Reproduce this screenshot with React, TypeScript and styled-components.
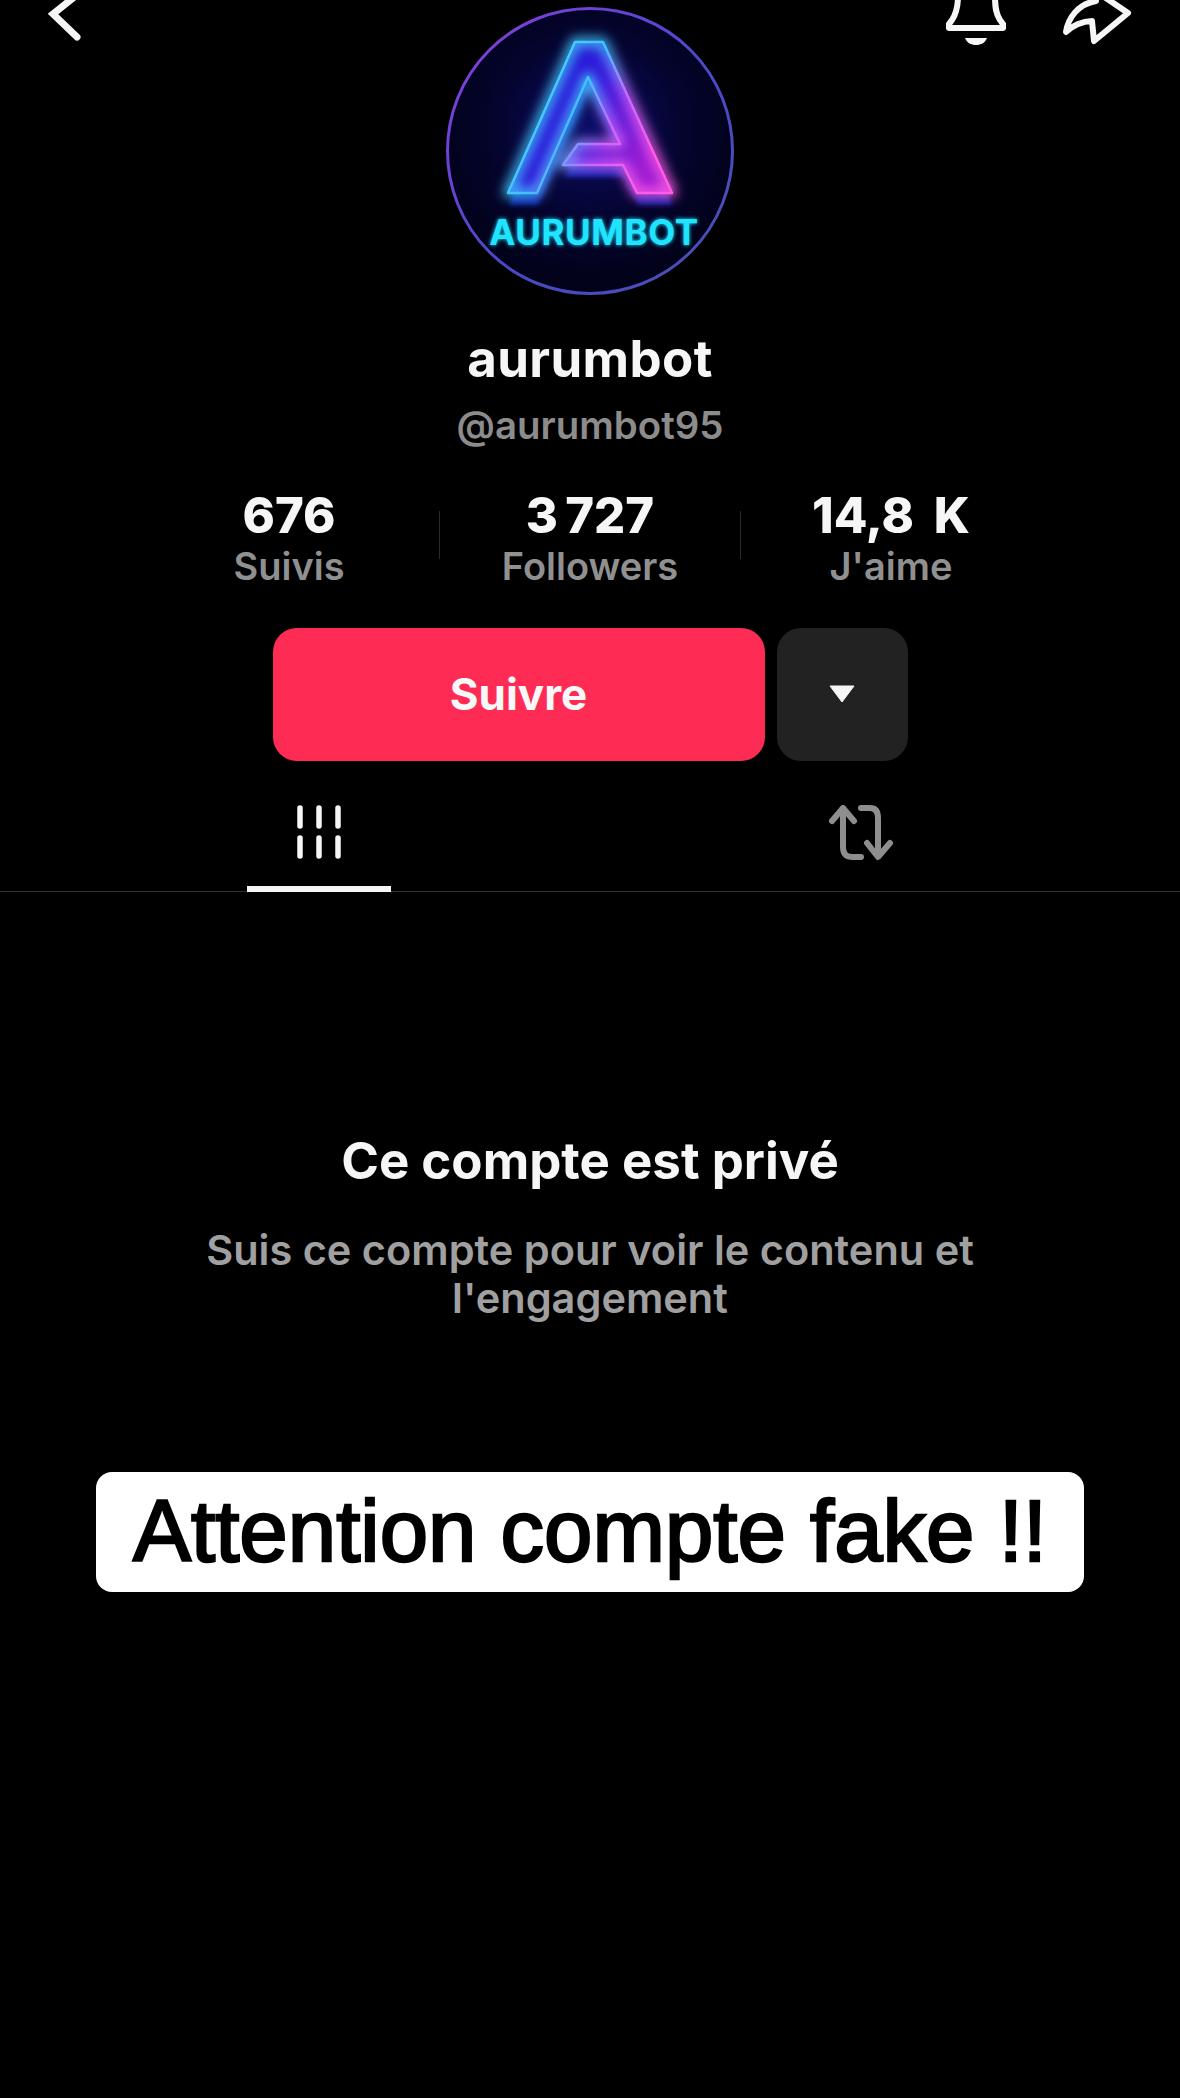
import React from 'react'
import styled, { createGlobalStyle } from 'styled-components'

const GlobalStyle = createGlobalStyle`
  html, body {
    margin: 0;
    padding: 0;
    background: #000;
  }
`

const Page = styled.div`
  width: 1180px;
  height: 2098px;
  overflow: hidden;
  background: #000;
  color: #fff;
  font-family: Inter, "Noto Sans", sans-serif;
  display: flex;
  flex-direction: column;
  align-items: center;
`

const Top = styled.div`
  width: 100%;
  display: grid;
  grid-template-columns: 1fr 288px 1fr;
`

const TopLeft = styled.div`
  display: flex;
  padding-left: 48px;
`

const TopRight = styled.div`
  display: flex;
  justify-content: flex-end;
  gap: 56px;
  padding-right: 48px;
`

const Avatar = styled.div`
  padding-top: 7px;
  height: 288px;
`

const Name = styled.h1`
  margin: 36px 0 0;
  font-size: 51px;
  line-height: 56px;
  font-weight: 700;
  letter-spacing: 0.4px;
  color: #f6f6f6;
`

const Handle = styled.div`
  margin-top: 16px;
  font-size: 38.4px;
  line-height: 44px;
  font-weight: 600;
  color: #8c8c8c;
`

const Stats = styled.div`
  margin-top: 40px;
  display: flex;
  align-items: center;
`

const Stat = styled.div`
  width: 300px;
  display: flex;
  flex-direction: column;
  align-items: center;
`

const StatValue = styled.div`
  font-size: 49px;
  line-height: 58px;
  font-weight: 800;
  word-spacing: 9px;
  color: #f6f6f6;
`

const StatLabel = styled.div`
  margin-top: -2px;
  font-size: 38px;
  line-height: 46px;
  font-weight: 600;
  color: #909090;
`

const Divider = styled.div`
  width: 1px;
  height: 48px;
  margin-bottom: 6px;
  background: #2a2a2a;
`

const Actions = styled.div`
  margin-top: 39px;
  display: flex;
  gap: 12px;
`

const FollowButton = styled.button`
  width: 492px;
  height: 133px;
  border: 0;
  border-radius: 24px;
  background: #fe2c55;
  color: #f8f8f8;
  font-family: inherit;
  font-size: 44px;
  font-weight: 700;
  padding: 0 0 2px;
`

const MoreButton = styled.button`
  width: 131px;
  height: 133px;
  border: 0;
  border-radius: 24px;
  background: #222222;
  display: flex;
  align-items: center;
  justify-content: center;
  padding: 0 0 2px;
`

const Tabs = styled.div`
  margin-top: 32px;
  width: 100%;
  height: 99px;
  box-sizing: border-box;
  border-bottom: 1px solid #2e2e2e;
  display: flex;
`

const Tab = styled.div<{ $x: number; $active?: boolean }>`
  margin-left: ${(p) => p.$x}px;
  width: 144px;
  height: 99px;
  box-sizing: border-box;
  padding-top: 12px;
  display: flex;
  justify-content: center;
  border-bottom: ${(p) => (p.$active ? '6px solid #f6f6f6' : '0')};
`

const PrivateBlock = styled.div`
  margin-top: 240px;
  display: flex;
  flex-direction: column;
  align-items: center;
  text-align: center;
`

const PrivateTitle = styled.h2`
  margin: 0;
  font-size: 51px;
  line-height: 58px;
  font-weight: 700;
  color: #f6f6f6;
`

const PrivateText = styled.p`
  margin: 36px 0 0;
  width: 800px;
  font-size: 41.5px;
  line-height: 48px;
  font-weight: 600;
  color: #a0a0a0;
`

const Banner = styled.div`
  margin-top: 150px;
  width: 988px;
  height: 120px;
  box-sizing: border-box;
  padding-bottom: 3px;
  border-radius: 16px;
  background: #fff;
  color: #000;
  display: flex;
  align-items: center;
  justify-content: center;
  font-family: "Liberation Sans", Arial, sans-serif;
  font-size: 87px;
  line-height: 1;
  -webkit-text-stroke: 2.4px #000;
`

const LETTER_A = 'M62 186 L129 35 L157 35 L226 186 L191 186 L177 158 L117 158 L132 137 L174 137 L142 70 L91 186 Z'

const Logo = () => (
  <svg width="288" height="288" viewBox="0 0 288 288">
    <defs>
      <radialGradient id="disc" cx="50%" cy="42%" r="55%">
        <stop offset="0%" stopColor="#0c0c68" />
        <stop offset="60%" stopColor="#04042e" />
        <stop offset="100%" stopColor="#02021a" />
      </radialGradient>
      <linearGradient id="ring" x1="0" y1="0" x2="1" y2="1">
        <stop offset="0%" stopColor="#8a3de0" />
        <stop offset="55%" stopColor="#4a48c8" />
        <stop offset="100%" stopColor="#4a50b0" />
      </linearGradient>
      <linearGradient id="neon" x1="0" y1="0" x2="1" y2="0.5">
        <stop offset="0%" stopColor="#4ae0ff" />
        <stop offset="50%" stopColor="#40c0ff" />
        <stop offset="72%" stopColor="#c866ff" />
        <stop offset="100%" stopColor="#ff5ce6" />
      </linearGradient>
      <linearGradient id="fill" x1="0" y1="0" x2="1" y2="0.5">
        <stop offset="0%" stopColor="#0a22d8" />
        <stop offset="55%" stopColor="#3a18e0" />
        <stop offset="100%" stopColor="#b01cd8" />
      </linearGradient>
      <filter id="glow" x="-30%" y="-30%" width="160%" height="160%">
        <feGaussianBlur stdDeviation="6" />
      </filter>
      <filter id="soft" x="-30%" y="-30%" width="160%" height="160%">
        <feGaussianBlur stdDeviation="2.2" />
      </filter>
    </defs>
    <circle cx="144" cy="144" r="142.5" fill="url(#disc)" stroke="url(#ring)" strokeWidth="3" />
    <path d={LETTER_A} fill="#0c28d0" opacity="0.7" transform="translate(1 12)" filter="url(#soft)" />
    <path d={LETTER_A} fill="url(#fill)" opacity="0.9" />
    <path d={LETTER_A} fill="none" stroke="url(#neon)" strokeWidth="9" strokeLinejoin="round" filter="url(#glow)" />
    <path d={LETTER_A} fill="none" stroke="url(#neon)" strokeWidth="2.5" strokeLinejoin="round" />
    <text
      x="148"
      y="238"
      textAnchor="middle"
      fontFamily="Inter, sans-serif"
      fontWeight="700"
      fontSize="35"
      letterSpacing="0.6"
      fill="#1fe4ff"
      filter="url(#soft)"
    >
      AURUMBOT
    </text>
    <text
      x="148"
      y="238"
      textAnchor="middle"
      fontFamily="Inter, sans-serif"
      fontWeight="700"
      fontSize="35"
      letterSpacing="0.6"
      fill="#1fe4ff"
    >
      AURUMBOT
    </text>
  </svg>
)

const Back = () => (
  <svg width="40" height="46" viewBox="0 0 40 46">
    <path d="M30 -6 L5 14 L29 37" fill="none" stroke="#f6f6f6" strokeWidth="7" strokeLinecap="round" strokeLinejoin="miter" />
  </svg>
)

const Bell = () => (
  <svg width="60" height="46" viewBox="0 0 60 46">
    <path
      d="M12 -4 C12 8 10 14 6 20 C3 24 1 26 3 28 H57 C59 26 57 24 54 20 C50 14 49 8 49 -4"
      fill="none"
      stroke="#f6f6f6"
      strokeWidth="6"
      strokeLinejoin="round"
    />
    <path d="M19 38 H41 C39 43 35 45 30 45 C25 45 21 43 19 38 Z" fill="#f6f6f6" />
  </svg>
)

const Share = () => (
  <svg width="70" height="46" viewBox="0 0 70 46">
    <path
      d="M38 -6 L66 13 L32 41 L30 21 C20 21 10 26 4 32 C6 18 16 4 34 1"
      fill="none"
      stroke="#f6f6f6"
      strokeWidth="6"
      strokeLinejoin="round"
      strokeLinecap="round"
    />
  </svg>
)

const Caret = () => (
  <svg width="26" height="18" viewBox="0 0 26 18">
    <path d="M1 1 H25 L13 17 Z" fill="#f6f6f6" stroke="#f6f6f6" strokeWidth="1" strokeLinejoin="round" />
  </svg>
)

const GridIcon = () => (
  <svg width="46" height="54" viewBox="0 0 46 54">
    <g stroke="#f6f6f6" strokeWidth="5.5" strokeLinecap="round">
      <path d="M4 3 V21 M23 3 V21 M42 3 V21 M4 33 V51 M23 33 V51 M42 33 V51" />
    </g>
  </svg>
)

const RepostIcon = () => (
  <svg width="66" height="56" viewBox="0 0 66 56">
    <g fill="none" stroke="#8e8e8e" strokeWidth="6" strokeLinejoin="round" strokeLinecap="round">
      <path d="M4 16 L15 3 L26 16" />
      <path d="M15 4 V42 C15 49 18 52 25 52 H33" />
      <path d="M33 3 H42 C47 3 50 6 50 13 V50" />
      <path d="M39 38 L50 52 L62 38" />
    </g>
  </svg>
)

export default function App() {
  return (
    <Page>
      <GlobalStyle />
      <Top>
        <TopLeft>
          <Back />
        </TopLeft>
        <Avatar>
          <Logo />
        </Avatar>
        <TopRight>
          <Bell />
          <Share />
        </TopRight>
      </Top>
      <Name>aurumbot</Name>
      <Handle>@aurumbot95</Handle>
      <Stats>
        <Stat>
          <StatValue>676</StatValue>
          <StatLabel>Suivis</StatLabel>
        </Stat>
        <Divider />
        <Stat>
          <StatValue>3{'\u202f'}727</StatValue>
          <StatLabel>Followers</StatLabel>
        </Stat>
        <Divider />
        <Stat>
          <StatValue>14,8 K</StatValue>
          <StatLabel>J'aime</StatLabel>
        </Stat>
      </Stats>
      <Actions>
        <FollowButton>Suivre</FollowButton>
        <MoreButton>
          <Caret />
        </MoreButton>
      </Actions>
      <Tabs>
        <Tab $x={247} $active>
          <GridIcon />
        </Tab>
        <Tab $x={398}>
          <RepostIcon />
        </Tab>
      </Tabs>
      <PrivateBlock>
        <PrivateTitle>Ce compte est privé</PrivateTitle>
        <PrivateText>Suis ce compte pour voir le contenu et l'engagement</PrivateText>
      </PrivateBlock>
      <Banner>Attention compte fake !!</Banner>
    </Page>
  )
}
